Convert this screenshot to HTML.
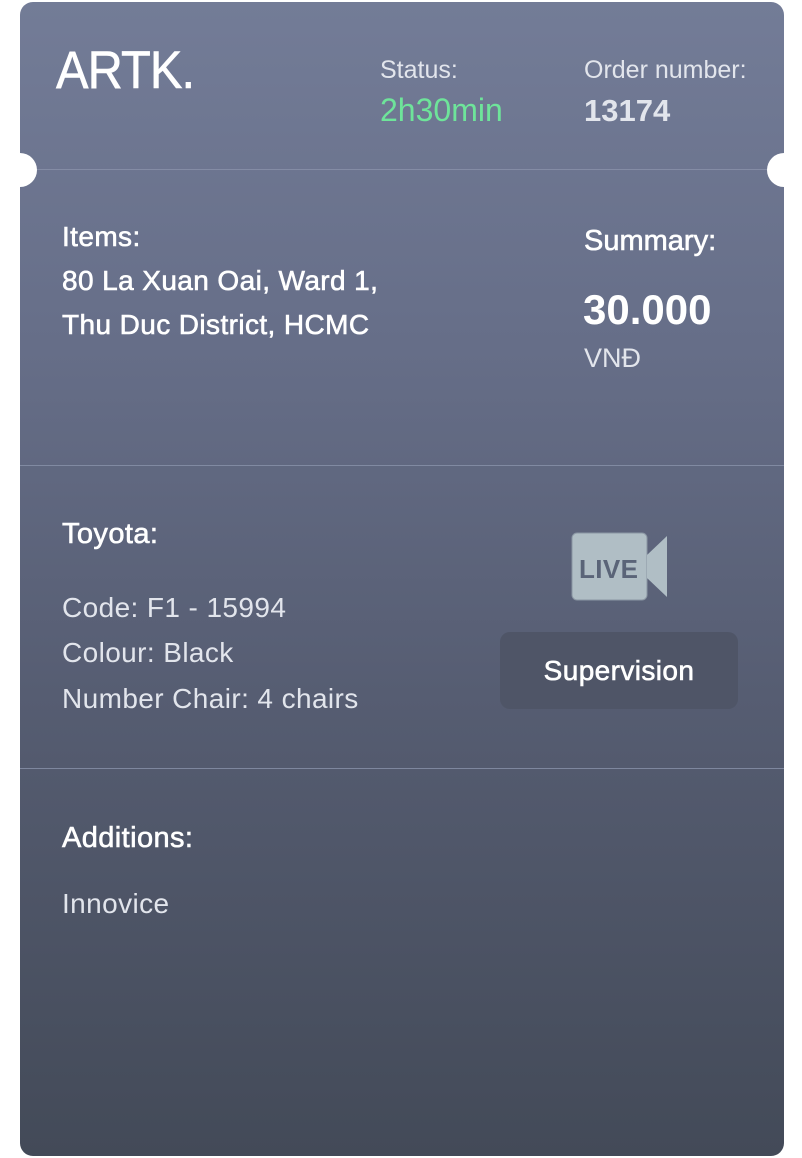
<!DOCTYPE html>
<html><head><meta charset="utf-8"><style>
html,body{margin:0;padding:0;background:#fff;width:802px;height:1158px;overflow:hidden}
.card{position:absolute;left:20px;top:2px;width:764px;height:1154px;border-radius:13px;background:linear-gradient(180deg,#737c97 0%,#666e88 30%,#565d72 60%,#434a58 100%);overflow:hidden;font-family:"Liberation Sans",sans-serif;color:#fff}
.t{position:absolute;white-space:nowrap;letter-spacing:0.4px}
.line{position:absolute;left:0;width:764px;height:1px;background:#8a92aa;opacity:.8}
.notch{position:absolute;width:34px;height:34px;border-radius:50%;background:#fff}
.m{-webkit-text-stroke:0.6px #fff}
.r{color:#e2e5ec}
</style></head><body>
<div class="card">
  <div class="t" style="left:36px;top:39px;font-size:53px;line-height:59px;transform:scaleX(.92);transform-origin:left;letter-spacing:-1px;-webkit-text-stroke:0.6px #fff">ARTK.</div>
  <div class="t r" style="left:360px;top:56px;font-size:25px;line-height:25px;letter-spacing:0">Status:</div>
  <div class="t" style="left:360px;top:92px;font-size:32px;line-height:32px;color:#6ee49a;letter-spacing:0">2h30min</div>
  <div class="t r" style="left:564px;top:56px;font-size:25px;line-height:25px;letter-spacing:0">Order number:</div>
  <div class="t r" style="left:564px;top:93px;font-size:31px;line-height:31px;font-weight:bold;letter-spacing:0">13174</div>
  <div class="line" style="top:167px"></div>
  <div class="t m" style="left:42px;top:221px;font-size:28px;line-height:28px">Items:</div>
  <div class="t m" style="left:42px;top:265px;font-size:28px;line-height:28px">80 La Xuan Oai, Ward 1,</div>
  <div class="t m" style="left:42px;top:309px;font-size:28px;line-height:28px">Thu Duc District, HCMC</div>
  <div class="t m" style="left:564px;top:225px;font-size:29px;line-height:29px;letter-spacing:0">Summary:</div>
  <div class="t" style="left:563px;top:287px;font-size:42px;line-height:42px;font-weight:bold;letter-spacing:0">30.000</div>
  <div class="t r" style="left:564px;top:343px;font-size:27px;line-height:27px;letter-spacing:0">VNĐ</div>
  <div class="line" style="top:463px"></div>
  <div class="t m" style="left:42px;top:518px;font-size:29px;line-height:29px">Toyota:</div>
  <div class="t r" style="left:42px;top:592px;font-size:28px;line-height:28px">Code: F1 - 15994</div>
  <div class="t r" style="left:42px;top:637px;font-size:28px;line-height:28px">Colour: Black</div>
  <div class="t r" style="left:42px;top:683px;font-size:28px;line-height:28px">Number Chair: 4 chairs</div>
  <svg class="t" style="left:551px;top:530px" width="100" height="72" viewBox="0 0 100 72">
    <rect x="1" y="1" width="75" height="67" rx="5" fill="#b0bec5" stroke="#8a96a3" stroke-width="1"/>
    <polygon points="76,23 96,4 96,65 76,46" fill="#b0bec5"/>
    <text x="8" y="46" font-family="Liberation Sans,sans-serif" font-size="26" font-weight="bold" fill="#5a6478">LIVE</text>
  </svg>
  <div class="t m" style="left:480px;top:630px;width:238px;height:77px;border-radius:10px;background:#4f5567;display:flex;align-items:center;justify-content:center;font-size:28px">Supervision</div>
  <div class="line" style="top:766px"></div>
  <div class="t m" style="left:42px;top:822px;font-size:29px;line-height:29px">Additions:</div>
  <div class="t r" style="left:42px;top:888px;font-size:28px;line-height:28px">Innovice</div>
</div>
<div class="notch" style="left:3px;top:153px"></div>
<div class="notch" style="left:767px;top:153px"></div>
</body></html>
